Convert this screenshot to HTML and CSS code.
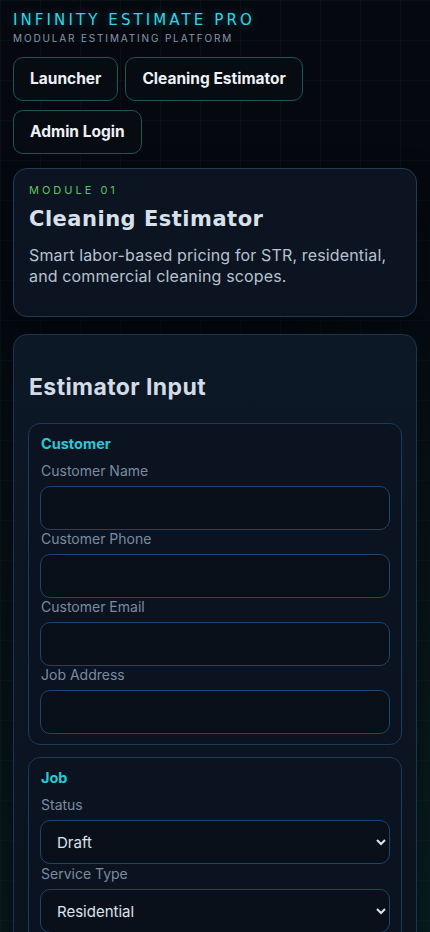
FILE: index.html
```html
<!DOCTYPE html>
<html lang="en">
<head>
    <meta charset="UTF-8">
    <meta name="viewport" content="width=device-width, initial-scale=1.0">
    <title>Infinity Estimate Pro</title>
    <link rel="stylesheet" href="styles.css">
</head>
<body>
    <header class="brand">
        <h1 class="brand-title">Infinity Estimate Pro</h1>
        <p class="brand-sub">Modular Estimating Platform</p>
    </header>

    <nav class="nav">
        <a href="#" class="nav-btn">Launcher</a>
        <a href="#" class="nav-btn">Cleaning Estimator</a>
        <a href="#" class="nav-btn">Admin Login</a>
    </nav>

    <section class="hero card">
        <p class="eyebrow">Module 01</p>
        <h2 class="hero-title">Cleaning Estimator</h2>
        <p class="hero-text">Smart labor-based pricing for STR, residential, and commercial cleaning scopes.</p>
    </section>

    <section class="card form-card">
        <h2 class="form-title">Estimator Input</h2>

        <div class="group">
            <h3 class="group-title">Customer</h3>
            <label for="custName">Customer Name</label>
            <input type="text" id="custName">
            <label for="custPhone">Customer Phone</label>
            <input type="text" id="custPhone">
            <label for="custEmail">Customer Email</label>
            <input type="email" id="custEmail">
            <label for="jobAddress">Job Address</label>
            <input type="text" id="jobAddress">
        </div>

        <div class="group">
            <h3 class="group-title">Job</h3>
            <label for="status">Status</label>
            <select id="status">
                <option>Draft</option>
                <option>Sent</option>
                <option>Approved</option>
            </select>
            <label for="serviceType">Service Type</label>
            <select id="serviceType">
                <option>Residential</option>
                <option>STR</option>
                <option>Commercial</option>
            </select>
        </div>
    </section>
</body>
</html>
```

FILE: styles.css
```css
body {
    margin: 0;
    padding: 13px 13px 40px 13px;
    font-family: 'Inter', 'Liberation Sans', sans-serif;
    color: #d6dee8;
    background-color: #05090f;
    background-image:
        radial-gradient(ellipse at 100% 100%, rgba(20, 90, 80, 0.25), transparent 55%),
        radial-gradient(ellipse at 0% 100%, rgba(20, 90, 80, 0.18), transparent 50%),
        linear-gradient(rgba(60, 120, 160, 0.05) 1px, transparent 1px),
        linear-gradient(90deg, rgba(60, 120, 160, 0.05) 1px, transparent 1px);
    background-size: 100% 100%, 100% 100%, 40px 40px, 40px 40px;
    background-attachment: fixed;
    min-height: 100vh;
    box-sizing: border-box;
}

.brand-title {
    margin: 0;
    font-family: 'DejaVu Sans', sans-serif;
    font-size: 15px;
    font-weight: 400;
    line-height: 15px;
    letter-spacing: 3.1px;
    text-transform: uppercase;
    color: #2fd6e6;
    text-shadow: 0 0 10px rgba(47, 214, 230, 0.35);
}

.brand-sub {
    margin: 4px 0 0 0;
    font-size: 10px;
    line-height: 12px;
    letter-spacing: 1.85px;
    text-transform: uppercase;
    color: #8797ab;
}

.nav {
    display: flex;
    flex-wrap: wrap;
    gap: 9px 7px;
    margin-top: 13px;
}

.nav-btn {
    display: block;
    padding: 0 16px;
    height: 44px;
    line-height: 42px;
    box-sizing: border-box;
    border: 1px solid #1d5558;
    border-radius: 10px;
    background-color: #070c13;
    color: #eef2f7;
    font-size: 15.5px;
    font-weight: 700;
    text-decoration: none;
}

.card {
    background-color: #0b1420;
    border: 1px solid #1b3550;
    border-radius: 14px;
    box-shadow: 0 10px 30px rgba(0, 0, 0, 0.4);
}

.hero {
    margin-top: 14px;
    padding: 14px 15px 13px 15px;
    border-color: #1e3c58;
}

.eyebrow {
    margin: 0;
    font-size: 11px;
    line-height: 15px;
    letter-spacing: 3px;
    text-transform: uppercase;
    color: #5cc35f;
}

.hero-title {
    margin: 7px 0 0 0;
    font-family: 'DejaVu Sans', sans-serif;
    font-size: 21px;
    font-weight: 700;
    line-height: 28px;
    letter-spacing: 0.5px;
    color: #d8e0ea;
}

.hero-text {
    margin: 12px 0 16px 0;
    font-size: 16px;
    line-height: 21px;
    letter-spacing: 0.15px;
    color: #b7c2d0;
}

.form-card {
    margin-top: 17px;
    padding: 16px 14px 14px 14px;
    background-image: linear-gradient(180deg, #0d1826, #0a121d);
}

.form-title {
    margin: 21px 0 21px 1px;
    font-size: 23px;
    font-weight: 700;
    line-height: 30px;
    letter-spacing: 0.4px;
    color: #d3dce6;
}

.group {
    border: 1px solid #1c3a5c;
    border-radius: 12px;
    padding: 10px 11px 10px 11px;
    margin-bottom: 12px;
    background-color: #0a131f;
}

.group-title {
    margin: 0 0 9px 1px;
    font-size: 14.5px;
    font-weight: 700;
    line-height: 19px;
    color: #27c9d6;
}

label {
    display: block;
    margin: 0 0 6px 1px;
    font-size: 14px;
    line-height: 18px;
    color: #7a8ba0;
}

input,
select {
    display: block;
    width: 100%;
    height: 44px;
    box-sizing: border-box;
    margin: 0;
    padding: 0 16px;
    border: 1px solid #1d4470;
    border-radius: 10px;
    background-color: #09101a;
    color: #dbe3ec;
    font-family: inherit;
    font-size: 15px;
    color-scheme: dark;
}

select {
    padding-left: 12px;
    margin-bottom: 1px;
}
```
